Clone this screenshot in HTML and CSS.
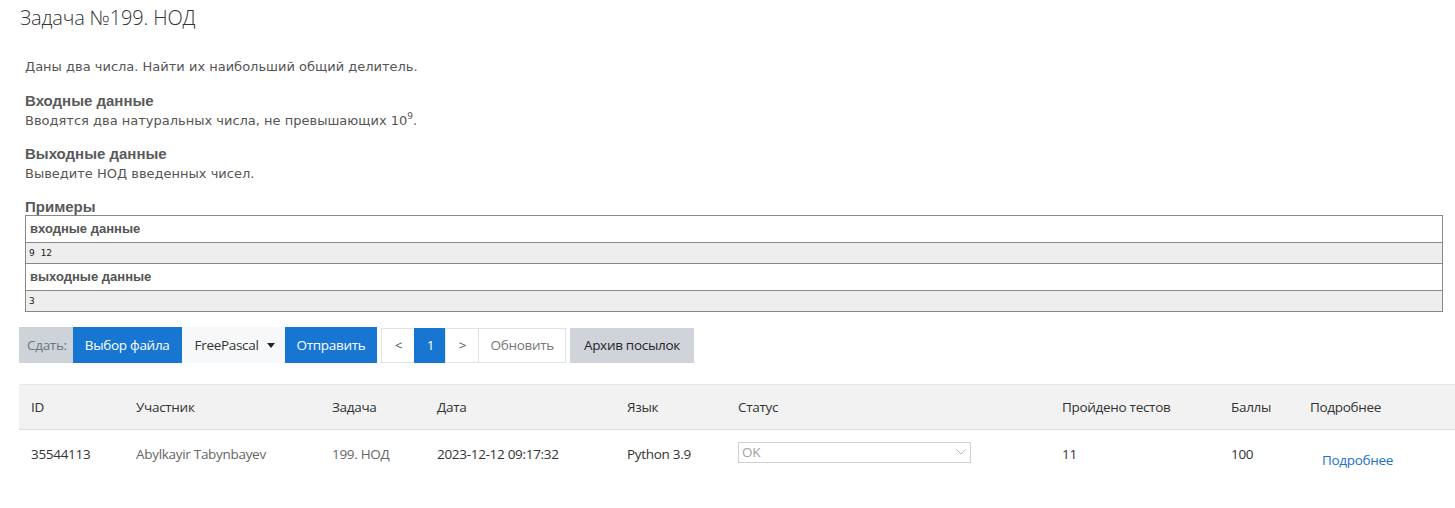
FILE: index.html
```html
<!DOCTYPE html>
<html lang="ru">
<head>
<meta charset="utf-8">
<title>Задача №199. НОД</title>
<link rel="stylesheet" href="styles.css">
</head>
<body>
<div class="page">
  <h1 class="title">Задача №199. НОД</h1>

  <div class="statement">
    <p class="legend">Даны два числа. Найти их наибольший общий делитель.</p>
    <h3 class="sec">Входные данные</h3>
    <p class="sec-text">Вводятся два натуральных числа, не превышающих 10<sup>9</sup>.</p>
    <h3 class="sec">Выходные данные</h3>
    <p class="sec-text">Выведите НОД введенных чисел.</p>
    <h3 class="sec examples-title">Примеры</h3>
    <div class="examples">
      <div class="ex-head">входные данные</div>
      <div class="ex-data">9 12</div>
      <div class="ex-head">выходные данные</div>
      <div class="ex-data">3</div>
    </div>
  </div>

  <div class="toolbar">
    <div class="group">
      <span class="lbl">Сдать:</span>
      <span class="btn blue">Выбор файла</span>
      <span class="btn light">FreePascal <span class="caret"></span></span>
      <span class="btn blue">Отправить</span>
    </div>
    <div class="pager">
      <span class="pg">&lt;</span>
      <span class="pg active">1</span>
      <span class="pg">&gt;</span>
      <span class="pg refresh">Обновить</span>
    </div>
    <span class="btn grey">Архив посылок</span>
  </div>

  <div class="runs">
    <div class="row head">
      <div class="c c-id">ID</div>
      <div class="c c-user">Участник</div>
      <div class="c c-task">Задача</div>
      <div class="c c-date">Дата</div>
      <div class="c c-lang">Язык</div>
      <div class="c c-status">Статус</div>
      <div class="c c-tests">Пройдено тестов</div>
      <div class="c c-score">Баллы</div>
      <div class="c c-more">Подробнее</div>
    </div>
    <div class="row body">
      <div class="c c-id">35544113</div>
      <div class="c c-user muted">Abylkayir Tabynbayev</div>
      <div class="c c-task muted">199. НОД</div>
      <div class="c c-date">2023-12-12 09:17:32</div>
      <div class="c c-lang">Python 3.9</div>
      <div class="c c-status">
        <div class="status-box"><span>OK</span>
          <svg width="10" height="6" viewBox="0 0 10 6"><path d="M0.5 0.5 L5 5 L9.5 0.5" fill="none" stroke="#b8b8b8" stroke-width="1"/></svg>
        </div>
      </div>
      <div class="c c-tests">11</div>
      <div class="c c-score">100</div>
      <div class="c c-more"><a class="link" href="#">Подробнее</a></div>
    </div>
  </div>
</div>
</body>
</html>
```

FILE: styles.css
```css
html, body {
  margin: 0;
  padding: 0;
  background: #fff;
}
.page {
  padding: 0 0 0 19px;
}
.title {
  margin: 0;
  padding: 6px 0 0 1px;
  font-family: "Open Sans", sans-serif;
  font-weight: 300;
  font-size: 20px;
  line-height: 24px;
  color: #333;
  letter-spacing: -0.15px;
}
.statement {
  padding: 28px 12px 0 6px;
  font-family: "DejaVu Sans", Verdana, sans-serif;
  color: #555;
}
.legend {
  margin: 0;
  font-size: 13px;
  line-height: 18px;
}
.sec {
  margin: 16px 0 0;
  font-family: "Liberation Sans", Arial, sans-serif;
  font-weight: bold;
  font-size: 15px;
  line-height: 17px;
  color: #5a5a5a;
}
.sec-text {
  margin: 3px 0 0;
  font-size: 13px;
  line-height: 18px;
}
.sec-text + .sec {
  margin-top: 15px;
}
.sec-text sup {
  font-size: 9px;
  line-height: 0;
  vertical-align: 6px;
}
.sec-text + .examples-title {
  margin-top: 15px;
  line-height: 17px;
}
.examples {
  border: 1px solid #888;
  margin-top: 0;
}
.ex-head {
  font-family: "Liberation Sans", Arial, sans-serif;
  font-weight: bold;
  font-size: 13px;
  line-height: 26px;
  padding-left: 4px;
  color: #555;
  background: #fff;
  border-bottom: 1px solid #888;
}
.ex-data {
  font-family: "DejaVu Sans Mono", "Liberation Mono", monospace;
  font-size: 9.5px;
  line-height: 20px;
  padding-left: 3px;
  color: #222;
  background: #eee;
  border-bottom: 1px solid #888;
}
.ex-data:last-child {
  border-bottom: none;
}

.toolbar {
  margin-top: 15px;
  display: flex;
  align-items: center;
  gap: 4px;
  font-family: "Open Sans", sans-serif;
  font-size: 13.5px;
  letter-spacing: -0.3px;
}
.group {
  display: flex;
  height: 36px;
}
.lbl {
  display: flex;
  align-items: center;
  padding: 0 6px 0 8px;
  background: #ced3da;
  color: #6c757d;
}
.btn {
  display: flex;
  align-items: center;
  height: 36px;
  box-sizing: border-box;
  padding: 0 12px;
  color: #333;
  white-space: nowrap;
}
.btn.blue {
  background: #1676d2;
  color: #fff;
}
.btn.light {
  background: #f7f8f9;
  color: #333;
  padding: 0 10px 0 13px;
  width: 103px;
}
.caret {
  display: inline-block;
  margin-left: 8px;
  width: 0;
  height: 0;
  border-left: 4px solid transparent;
  border-right: 4px solid transparent;
  border-top: 5px solid #222;
}
.btn.grey {
  background: #d0d4da;
  color: #212529;
  height: 35px;
  padding: 0 14px;
}
.pager {
  display: flex;
  height: 35px;
}
.pg {
  display: flex;
  align-items: center;
  justify-content: center;
  box-sizing: border-box;
  height: 35px;
  width: 34px;
  border: 1px solid #dee2e6;
  margin-left: -1px;
  color: #555;
  background: #fff;
}
.pg:first-child {
  margin-left: 0;
}
.pg.active {
  background: #1676d2;
  border-color: #1676d2;
  color: #fff;
  width: 32px;
}
.pg.refresh {
  width: auto;
  padding: 0 11px;
  color: #777;
}

.runs {
  margin-top: 21px;
  font-family: "Open Sans", sans-serif;
  font-size: 13.5px;
  letter-spacing: -0.3px;
  color: #333;
}
.row {
  display: flex;
  align-items: center;
}
.row.head {
  height: 44px;
  background: #f2f2f2;
  border-top: 1px solid #e6e6e6;
  border-bottom: 1px solid #dfdfdf;
}
.row.body {
  height: 48px;
}
.c {
  box-sizing: border-box;
  padding-left: 12px;
  white-space: nowrap;
}
.c-id { width: 105px; }
.c-user { width: 196px; }
.c-task { width: 105px; }
.c-date { width: 190px; }
.c-lang { width: 111px; }
.c-status { width: 324px; }
.c-tests { width: 169px; }
.c-score { width: 79px; }
.c-more { width: 153px; }
.muted { color: #666; }
.status-box {
  width: 233px;
  height: 21px;
  margin-bottom: 4px;
  box-sizing: border-box;
  border: 1px solid #cfcfcf;
  display: flex;
  align-items: center;
  justify-content: space-between;
  padding: 0 4px 0 3px;
  color: #a0a0a0;
  font-size: 13.5px;
}
.link {
  display: inline-block;
  margin: 12px 0 0 12px;
  color: #1b72c9;
  text-decoration: none;
}
```
